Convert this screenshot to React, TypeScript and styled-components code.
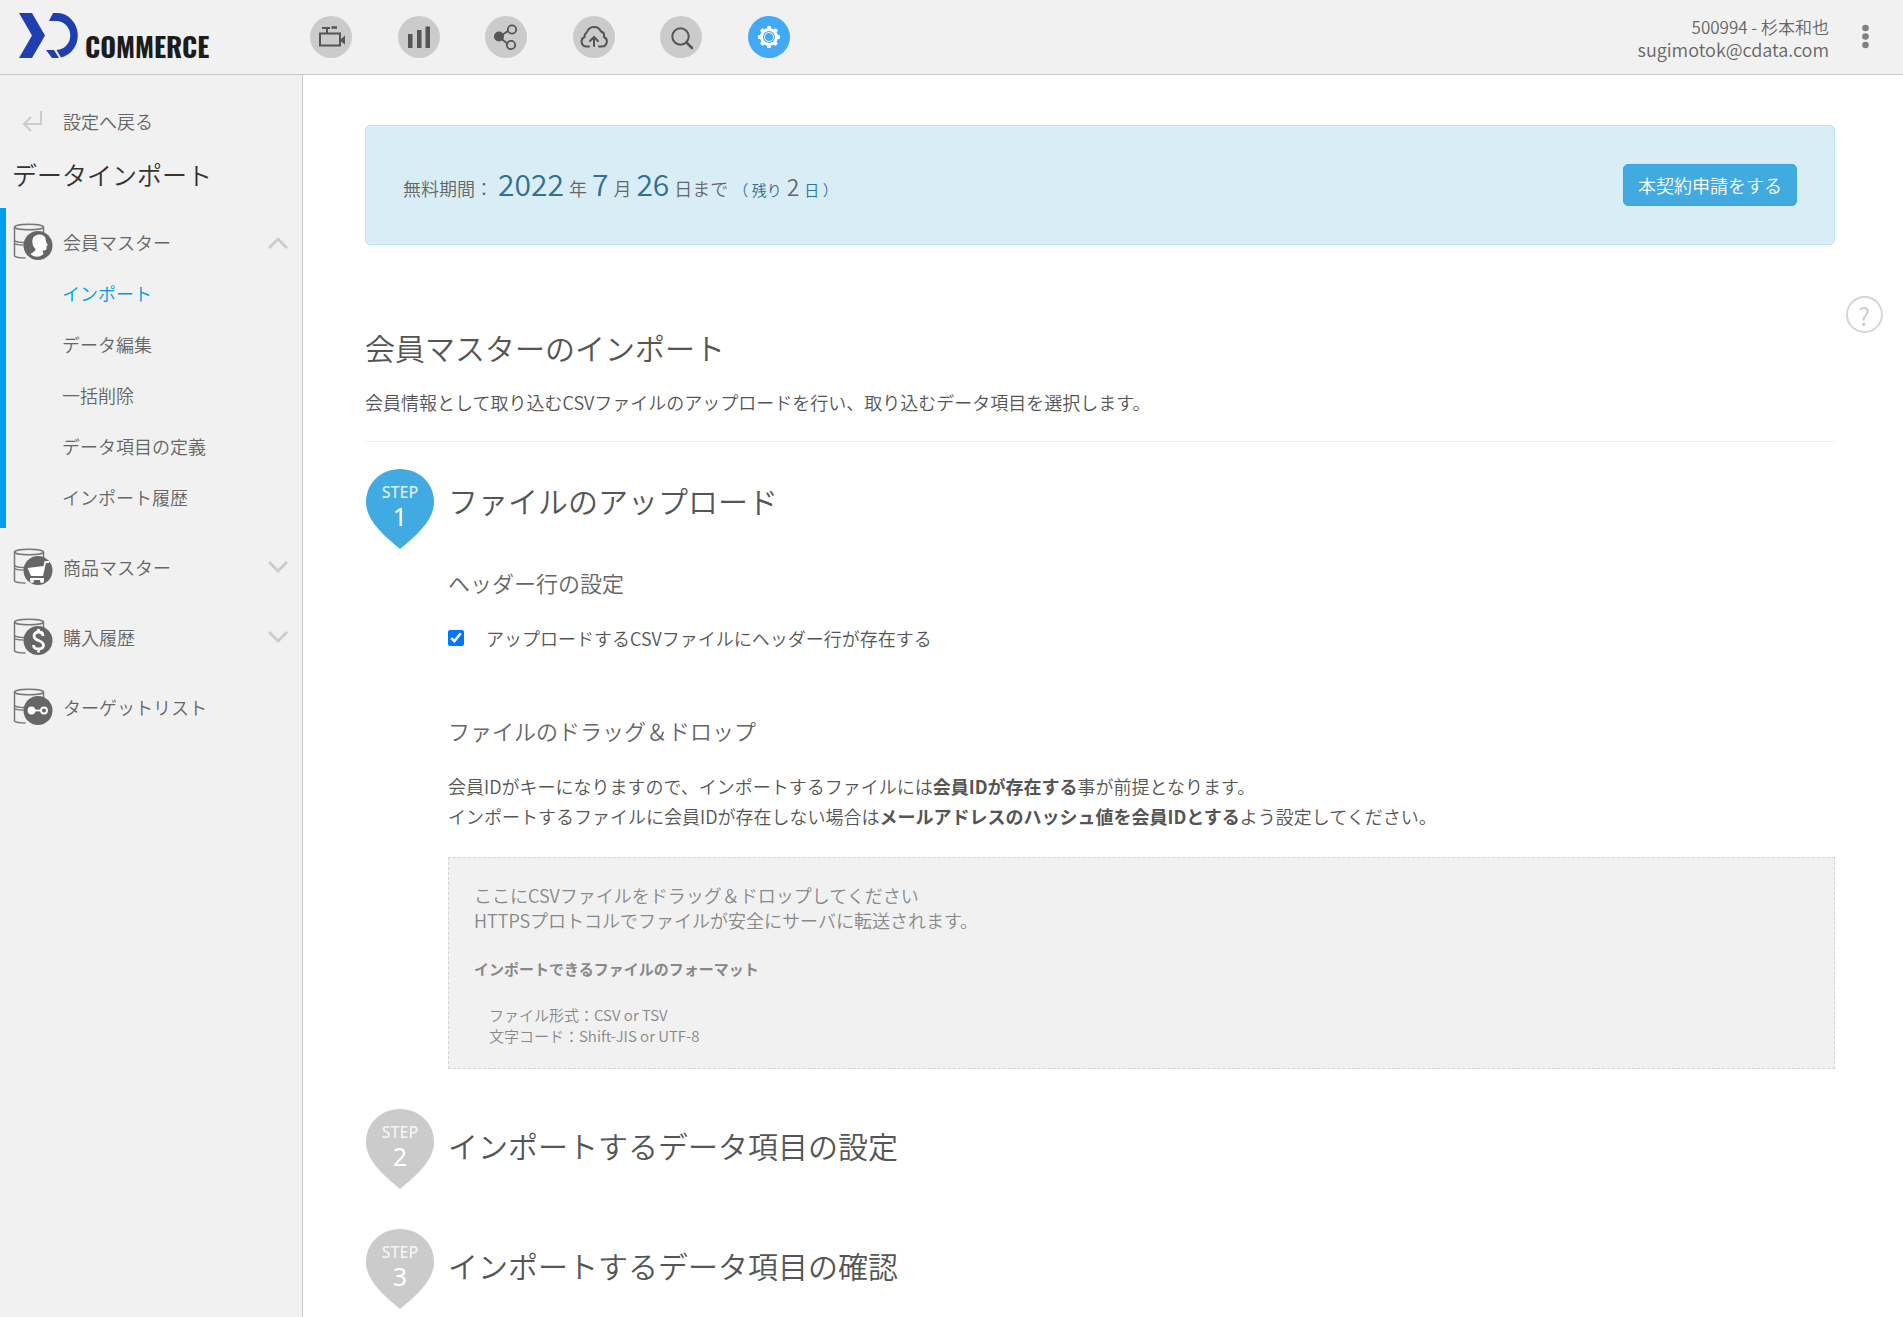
import React from 'react';
import styled, { createGlobalStyle } from 'styled-components';

const GlobalStyle = createGlobalStyle`
  *, *::before, *::after { box-sizing: border-box; }
  body {
    margin: 0;
    background: #fff;
    color: #555;
    font-family: 'Noto Sans CJK JP', 'Noto Sans', sans-serif;
    font-size: 18px;
    font-weight: 350;
    line-height: 30px;
  }
  h1, h2, h3, h4, p, ul { margin: 0; padding: 0; font-weight: 350; }
  ul { list-style: none; }
  a { color: inherit; text-decoration: none; }
  button { font: inherit; cursor: pointer; }
  svg { display: block; flex: none; }
`;

const Page = styled.div`
  display: flex;
  flex-direction: column;
  min-height: 100vh;
`;

const Header = styled.header`
  display: flex;
  align-items: center;
  height: 75px;
  padding: 0 30px 0 19px;
  background: #f1f1f1;
  border-bottom: 1px solid #c8c8c8;
`;

const LogoLink = styled.a`
  display: flex;
  align-items: baseline;
  align-self: flex-start;
  gap: 6px;
  width: 291px;
  padding-top: 13px;
`;

const LogoText = styled.span`
  color: #1c1c1c;
  font-family: 'Oswald', 'Roboto Condensed', 'Liberation Sans Narrow', Roboto, sans-serif;
  font-size: 27px;
  font-weight: 700;
`;

const GlobalNav = styled.nav`
  display: flex;
  justify-content: space-between;
  width: 480px;
`;

const NavButton = styled.a<{ $active?: boolean }>`
  display: grid;
  place-items: center;
  width: 42px;
  height: 42px;
  border-radius: 50%;
  background: ${(p) => (p.$active ? '#41a9f5' : '#cbcbcb')};
  color: ${(p) => (p.$active ? '#fff' : '#555')};
`;

const Account = styled.div`
  margin-left: auto;
  padding-top: 2px;
  color: #666;
  line-height: 23px;
  text-align: right;
`;

const AccountName = styled.div`
  font-size: 17px;
`;

const MenuButton = styled.button`
  display: grid;
  place-items: center;
  width: 15px;
  height: 30px;
  margin-left: 29px;
  padding: 0;
  border: 0;
  background: none;
  color: #808080;
`;

const Body = styled.div`
  display: flex;
  flex: 1;
`;

const Sidebar = styled.aside`
  flex: none;
  width: 303px;
  padding-top: 31px;
  background: #f1f1f1;
  border-right: 1px solid #c8c8c8;
  color: #666;
`;

const BackLink = styled.a`
  display: flex;
  align-items: center;
  gap: 20px;
  padding-left: 22px;
`;

const SideTitle = styled.h2`
  padding: 18px 12px 14px;
  color: #333;
  font-size: 25px;
  line-height: 40px;
`;

const Groups = styled.ul`
  display: flex;
  flex-direction: column;
  gap: 5px;
`;

const Group = styled.li<{ $open?: boolean }>`
  padding: 8px 14px 5px 6px;
  border-left: 6px solid ${(p) => (p.$open ? '#00a0ee' : 'transparent')};
`;

const GroupHead = styled.a`
  display: flex;
  align-items: center;
  gap: 10px;
  height: 52px;
`;

const GroupName = styled.span`
  flex: 1;
`;

const SubLink = styled.a<{ $active?: boolean }>`
  display: block;
  padding-left: 50px;
  line-height: 51px;
  color: ${(p) => (p.$active ? '#0099e8' : 'inherit')};
`;

const Main = styled.main`
  display: flex;
  flex: 1;
  min-width: 0;
  padding: 50px 0 0 62px;
`;

const Content = styled.div`
  flex: 1;
  min-width: 0;
`;

const Gutter = styled.div`
  display: flex;
  flex: none;
  justify-content: center;
  align-items: flex-start;
  width: 68px;
  padding: 171px 10px 0 0;
`;

const HelpButton = styled.button`
  width: 37px;
  height: 37px;
  padding: 0;
  border: 2px solid #d5d5d5;
  border-radius: 50%;
  background: none;
  color: #ccc;
  font-size: 25px;
  line-height: 32px;
`;

const Banner = styled.section`
  display: flex;
  align-items: center;
  justify-content: space-between;
  height: 120px;
  padding: 0 37px;
  background: #d9edf7;
  border: 1px solid #bce8f1;
  border-radius: 5px;
`;

const Trial = styled.p`
  display: flex;
  align-items: baseline;
  gap: 5px;
  padding-top: 2px;
  color: #666;
`;

const Figure = styled.strong`
  color: #31708f;
  font-size: 30px;
  font-weight: 350;
`;

const Remaining = styled.small`
  display: flex;
  align-items: baseline;
  gap: 5px;
  color: #31708f;
  font-size: 15px;
`;

const Days = styled.span`
  color: #666;
  font-size: 23px;
`;

const ApplyButton = styled.button`
  height: 42px;
  padding: 0 14px;
  border: 1px solid #3aa5e0;
  border-radius: 5px;
  background: #41abe1;
  color: #fff;
  line-height: 38px;
`;

const PageTitle = styled.h1`
  margin-top: 82px;
  font-size: 30px;
  line-height: 40px;
`;

const Lead = styled.p`
  padding: 20px 0 24px;
  border-bottom: 1px solid #eee;
`;

const Steps = styled.div`
  display: flex;
  flex-direction: column;
  gap: 40px;
  margin-top: 27px;
`;

const Step = styled.section`
  display: grid;
  grid-template-columns: 83px 1fr;
`;

const Pin = styled.div`
  position: relative;
  display: flex;
  flex-direction: column;
  align-items: center;
  width: 70px;
  height: 80px;
  padding-top: 13px;
  color: #fff;
  font-family: 'Noto Sans', 'Open Sans', sans-serif;
`;

const PinShape = styled.svg`
  position: absolute;
  inset: 0;
`;

const PinLabel = styled.span`
  position: relative;
  font-size: 16px;
  font-weight: 500;
  line-height: 20px;
  opacity: 0.8;
`;

const PinNumber = styled.span`
  position: relative;
  font-size: 25px;
  font-weight: 400;
  line-height: 28px;
`;

const StepTitle = styled.h2<{ $open?: boolean }>`
  padding-top: ${(p) => (p.$open ? 11 : 16)}px;
  font-size: 30px;
  line-height: 40px;
`;

const SubTitle = styled.h3`
  color: #666;
  font-size: 22px;
`;

const Block = styled.div<{ $first?: boolean }>`
  display: flex;
  flex-direction: column;
  gap: 26px;
  margin-top: ${(p) => (p.$first ? 47 : 62)}px;
`;

const CheckLabel = styled.label`
  display: flex;
  align-items: center;
  gap: 22px;
`;

const Check = styled.input`
  width: 16px;
  height: 16px;
  margin: 0;
  accent-color: #0075ff;
`;

const Strong = styled.strong`
  font-weight: 700;
`;

const DropZone = styled.div`
  display: flex;
  flex-direction: column;
  gap: 23px;
  padding: 25px 25px 22px;
  border: 1px dashed #d5d5d5;
  background: #f1f1f1;
  color: #888;
  line-height: 25px;
`;

const FormatTitle = styled.h4`
  font-size: 15px;
  font-weight: 700;
`;

const Formats = styled.ul`
  padding-left: 15px;
  font-size: 15px;
  line-height: 21px;
`;

function LogoMark() {
  return (
    <svg width="60" height="45" viewBox="0 0 60 45" fill="#1f3fb0" aria-hidden="true">
      <path d="M0 0h13l13 22.500L13 45H0l13-22.500z" />
      <path d="M34 0h5a21 22.500 0 0 1 3 44.500l-4.500-7.500A14 14.500 0 0 0 37 8h-7z" />
      <path d="M27 37h8l5 8h-7z" />
    </svg>
  );
}

function CameraIcon() {
  return (
    <svg width="28" height="28" viewBox="0 0 28 28" fill="none" stroke="currentColor" strokeWidth="2">
      <path d="M3 10.500h20v12H3zM10 10V5M5 5h8" />
      <path d="M14.500 4.500h5.500" strokeWidth="2.500" />
      <path d="M24 16l4.500-4v10L24 18.500z" fill="currentColor" stroke="none" />
    </svg>
  );
}

function ChartIcon() {
  return (
    <svg width="28" height="28" viewBox="0 0 28 28" fill="currentColor">
      <rect x="3" y="11" width="4.500" height="14" />
      <rect x="12" y="7" width="4.500" height="18" />
      <rect x="20.500" y="3.500" width="4.500" height="21.500" />
    </svg>
  );
}

function ShareIcon() {
  return (
    <svg width="28" height="28" viewBox="0 0 28 28" fill="none" stroke="currentColor" strokeWidth="1.800">
      <path d="M7 14l9-6M7 14l9 7" />
      <circle cx="7" cy="13.500" r="5" fill="currentColor" stroke="none" />
      <circle cx="20" cy="6.500" r="4.200" />
      <circle cx="19" cy="22" r="4.200" />
    </svg>
  );
}

function CloudIcon() {
  return (
    <svg width="28" height="28" viewBox="0 0 28 28" fill="none" stroke="currentColor" strokeWidth="2" strokeLinecap="round">
      <path d="M9 23.500H6a5 5 0 0 1-1.500-9.500A6 6 0 0 1 7 9a7.500 7.500 0 0 1 14-.5c3 1 3.500 3.500 3 5.500a5 5 0 0 1-2 9.500h-3" />
      <path d="M14 23v-8M10 18l4-4 4 4" />
    </svg>
  );
}

function SearchIcon() {
  return (
    <svg width="28" height="28" viewBox="0 0 28 28" fill="none" stroke="currentColor" strokeWidth="2" strokeLinecap="round">
      <circle cx="13.500" cy="13.500" r="8.200" />
      <path d="M20 20l5 5" strokeWidth="2.500" />
    </svg>
  );
}

function GearIcon() {
  const teeth = [0, 45, 90, 135, 180, 225, 270, 315];
  return (
    <svg width="28" height="28" viewBox="0 0 28 28" fill="none" stroke="currentColor">
      <circle cx="14" cy="14" r="7.500" strokeWidth="3" />
      <circle cx="14" cy="14" r="4.500" strokeWidth="1" />
      {teeth.map((angle) => (
        <rect key={angle} x="12" y="3" width="4" height="4" rx="1" fill="currentColor" stroke="none" transform={`rotate(${angle} 14 14)`} />
      ))}
    </svg>
  );
}

function Chevron({ up }: { up?: boolean }) {
  return (
    <svg width="20" height="14" viewBox="0 0 20 14" fill="none" stroke="#ccc" strokeWidth="3">
      <path d={up ? 'M1 13l9-9 9 9' : 'M1 2l9 9 9-9'} />
    </svg>
  );
}

function DatabaseIcon({ children }: { children: React.ReactNode }) {
  return (
    <svg width="41" height="38" viewBox="-1 0 41 38">
      <g fill="none" stroke="#777" strokeWidth="1.500">
        <ellipse cx="16" cy="4" rx="14.500" ry="2.800" />
        <path d="M1.500 4v29c2 2 5 2 11 2M30.500 4v6M1.500 17.500c2 2 6 2 10 2M1.500 20.500c2 1.500 6 1.500 9 1.500" />
      </g>
      <circle cx="25" cy="22.500" r="14.500" fill="#666" />
      {children}
    </svg>
  );
}

const memberIcon = (
  <DatabaseIcon>
    <path fill="#fff" d="M20 15c2-4 9-5 12-1l1.500 6 1.500 2-1.500 1v3c-1 2-3 1-4 2l1 3c-3 3-9 4-13 0 3-2 5-3 5-5-3-3-4-7-2.500-11z" />
  </DatabaseIcon>
);
const productIcon = (
  <DatabaseIcon>
    <path fill="#fff" d="M14.500 20l16-2 1-5h4.500v2h-3l-3 13H18z" />
    <path stroke="#fff" strokeWidth="2" d="M17 31h14" />
    <circle cx="19" cy="33" r="2" fill="#fff" />
    <circle cx="29" cy="33" r="2" fill="#fff" />
  </DatabaseIcon>
);
const orderIcon = (
  <DatabaseIcon>
    <path fill="none" stroke="#fff" strokeWidth="2.800" d="M30 18c0-3-2-4-4.500-4s-4.500 1.500-4.500 4 2 3.500 4.500 4.500 5 2 5 4.500-2 4-5 4-5-1.500-5-4M25.500 11v3M25.500 31v3.500" />
  </DatabaseIcon>
);
const targetIcon = (
  <DatabaseIcon>
    <g stroke="#fff" strokeWidth="1.800" fill="none">
      <path d="M18 22.500h10" />
      <circle cx="31" cy="22.500" r="3" />
      <circle cx="18.500" cy="22.500" r="3" fill="#fff" />
    </g>
  </DatabaseIcon>
);

function StepPin({ no, active }: { no: number; active?: boolean }) {
  return (
    <Pin>
      <PinShape width="70" height="80" viewBox="0 0 70 80" aria-hidden="true">
        <path fill={active ? '#41abe1' : '#cbcbcb'} d="M35 0C54 0 69 14 69 33 69 51 52 66 35 80 18 66 1 51 1 33 1 14 16 0 35 0z" />
      </PinShape>
      <PinLabel>STEP</PinLabel>
      <PinNumber>{no}</PinNumber>
    </Pin>
  );
}

const navItems = [
  { label: '動画', icon: <CameraIcon /> },
  { label: 'レポート', icon: <ChartIcon /> },
  { label: '共有', icon: <ShareIcon /> },
  { label: 'アップロード', icon: <CloudIcon /> },
  { label: '検索', icon: <SearchIcon /> },
  { label: '設定', icon: <GearIcon />, active: true },
];

const memberLinks = ['インポート', 'データ編集', '一括削除', 'データ項目の定義', 'インポート履歴'];

export default function App() {
  return (
    <Page>
      <GlobalStyle />
      <Header>
        <LogoLink href="#"><LogoMark /><LogoText>COMMERCE</LogoText></LogoLink>
        <GlobalNav>
          {navItems.map((item) => (
            <NavButton key={item.label} href="#" aria-label={item.label} $active={item.active}>{item.icon}</NavButton>
          ))}
        </GlobalNav>
        <Account>
          <AccountName>500994 - 杉本和也</AccountName>
          <div>sugimotok@cdata.com</div>
        </Account>
        <MenuButton type="button" aria-label="メニュー">
          <svg width="7" height="26" viewBox="0 0 7 26" fill="currentColor">
            <circle cx="3.500" cy="4" r="3.300" />
            <circle cx="3.500" cy="12.500" r="3.300" />
            <circle cx="3.500" cy="21" r="3.300" />
          </svg>
        </MenuButton>
      </Header>
      <Body>
        <Sidebar>
          <BackLink href="#">
            <svg width="21" height="24" viewBox="0 0 21 24" fill="none" stroke="#ccc" strokeWidth="2">
              <path d="M19 2v13H2M9 8l-7 7 7 7" />
            </svg>
            設定へ戻る
          </BackLink>
          <SideTitle>データインポート</SideTitle>
          <Groups>
            <Group $open>
              <GroupHead href="#">{memberIcon}<GroupName>会員マスター</GroupName><Chevron up /></GroupHead>
              <ul>
                {memberLinks.map((label, i) => (
                  <li key={label}><SubLink href="#" $active={i === 0}>{label}</SubLink></li>
                ))}
              </ul>
            </Group>
            <Group><GroupHead href="#">{productIcon}<GroupName>商品マスター</GroupName><Chevron /></GroupHead></Group>
            <Group><GroupHead href="#">{orderIcon}<GroupName>購入履歴</GroupName><Chevron /></GroupHead></Group>
            <Group><GroupHead href="#">{targetIcon}<GroupName>ターゲットリスト</GroupName></GroupHead></Group>
          </Groups>
        </Sidebar>
        <Main>
          <Content>
            <Banner>
              <Trial>
                無料期間：<Figure>2022</Figure>年<Figure>7</Figure>月<Figure>26</Figure>日まで
                <Remaining>（ 残り<Days>2</Days>日 ）</Remaining>
              </Trial>
              <ApplyButton type="button">本契約申請をする</ApplyButton>
            </Banner>
            <PageTitle>会員マスターのインポート</PageTitle>
            <Lead>会員情報として取り込むCSVファイルのアップロードを行い、取り込むデータ項目を選択します。</Lead>
            <Steps>
              <Step>
                <StepPin no={1} active />
                <div>
                  <StepTitle $open>ファイルのアップロード</StepTitle>
                  <Block $first>
                    <SubTitle>ヘッダー行の設定</SubTitle>
                    <CheckLabel>
                      <Check type="checkbox" defaultChecked />
                      アップロードするCSVファイルにヘッダー行が存在する
                    </CheckLabel>
                  </Block>
                  <Block>
                    <SubTitle>ファイルのドラッグ＆ドロップ</SubTitle>
                    <p>
                      会員IDがキーになりますので、インポートするファイルには<Strong>会員IDが存在する</Strong>事が前提となります。<br />
                      インポートするファイルに会員IDが存在しない場合は<Strong>メールアドレスのハッシュ値を会員IDとする</Strong>よう設定してください。
                    </p>
                    <DropZone>
                      <p>
                        ここにCSVファイルをドラッグ＆ドロップしてください<br />
                        HTTPSプロトコルでファイルが安全にサーバに転送されます。
                      </p>
                      <FormatTitle>インポートできるファイルのフォーマット</FormatTitle>
                      <Formats>
                        <li>ファイル形式：CSV or TSV</li>
                        <li>文字コード：Shift-JIS or UTF-8</li>
                      </Formats>
                    </DropZone>
                  </Block>
                </div>
              </Step>
              <Step>
                <StepPin no={2} />
                <StepTitle>インポートするデータ項目の設定</StepTitle>
              </Step>
              <Step>
                <StepPin no={3} />
                <StepTitle>インポートするデータ項目の確認</StepTitle>
              </Step>
            </Steps>
          </Content>
          <Gutter>
            <HelpButton type="button" aria-label="ヘルプ">?</HelpButton>
          </Gutter>
        </Main>
      </Body>
    </Page>
  );
}
